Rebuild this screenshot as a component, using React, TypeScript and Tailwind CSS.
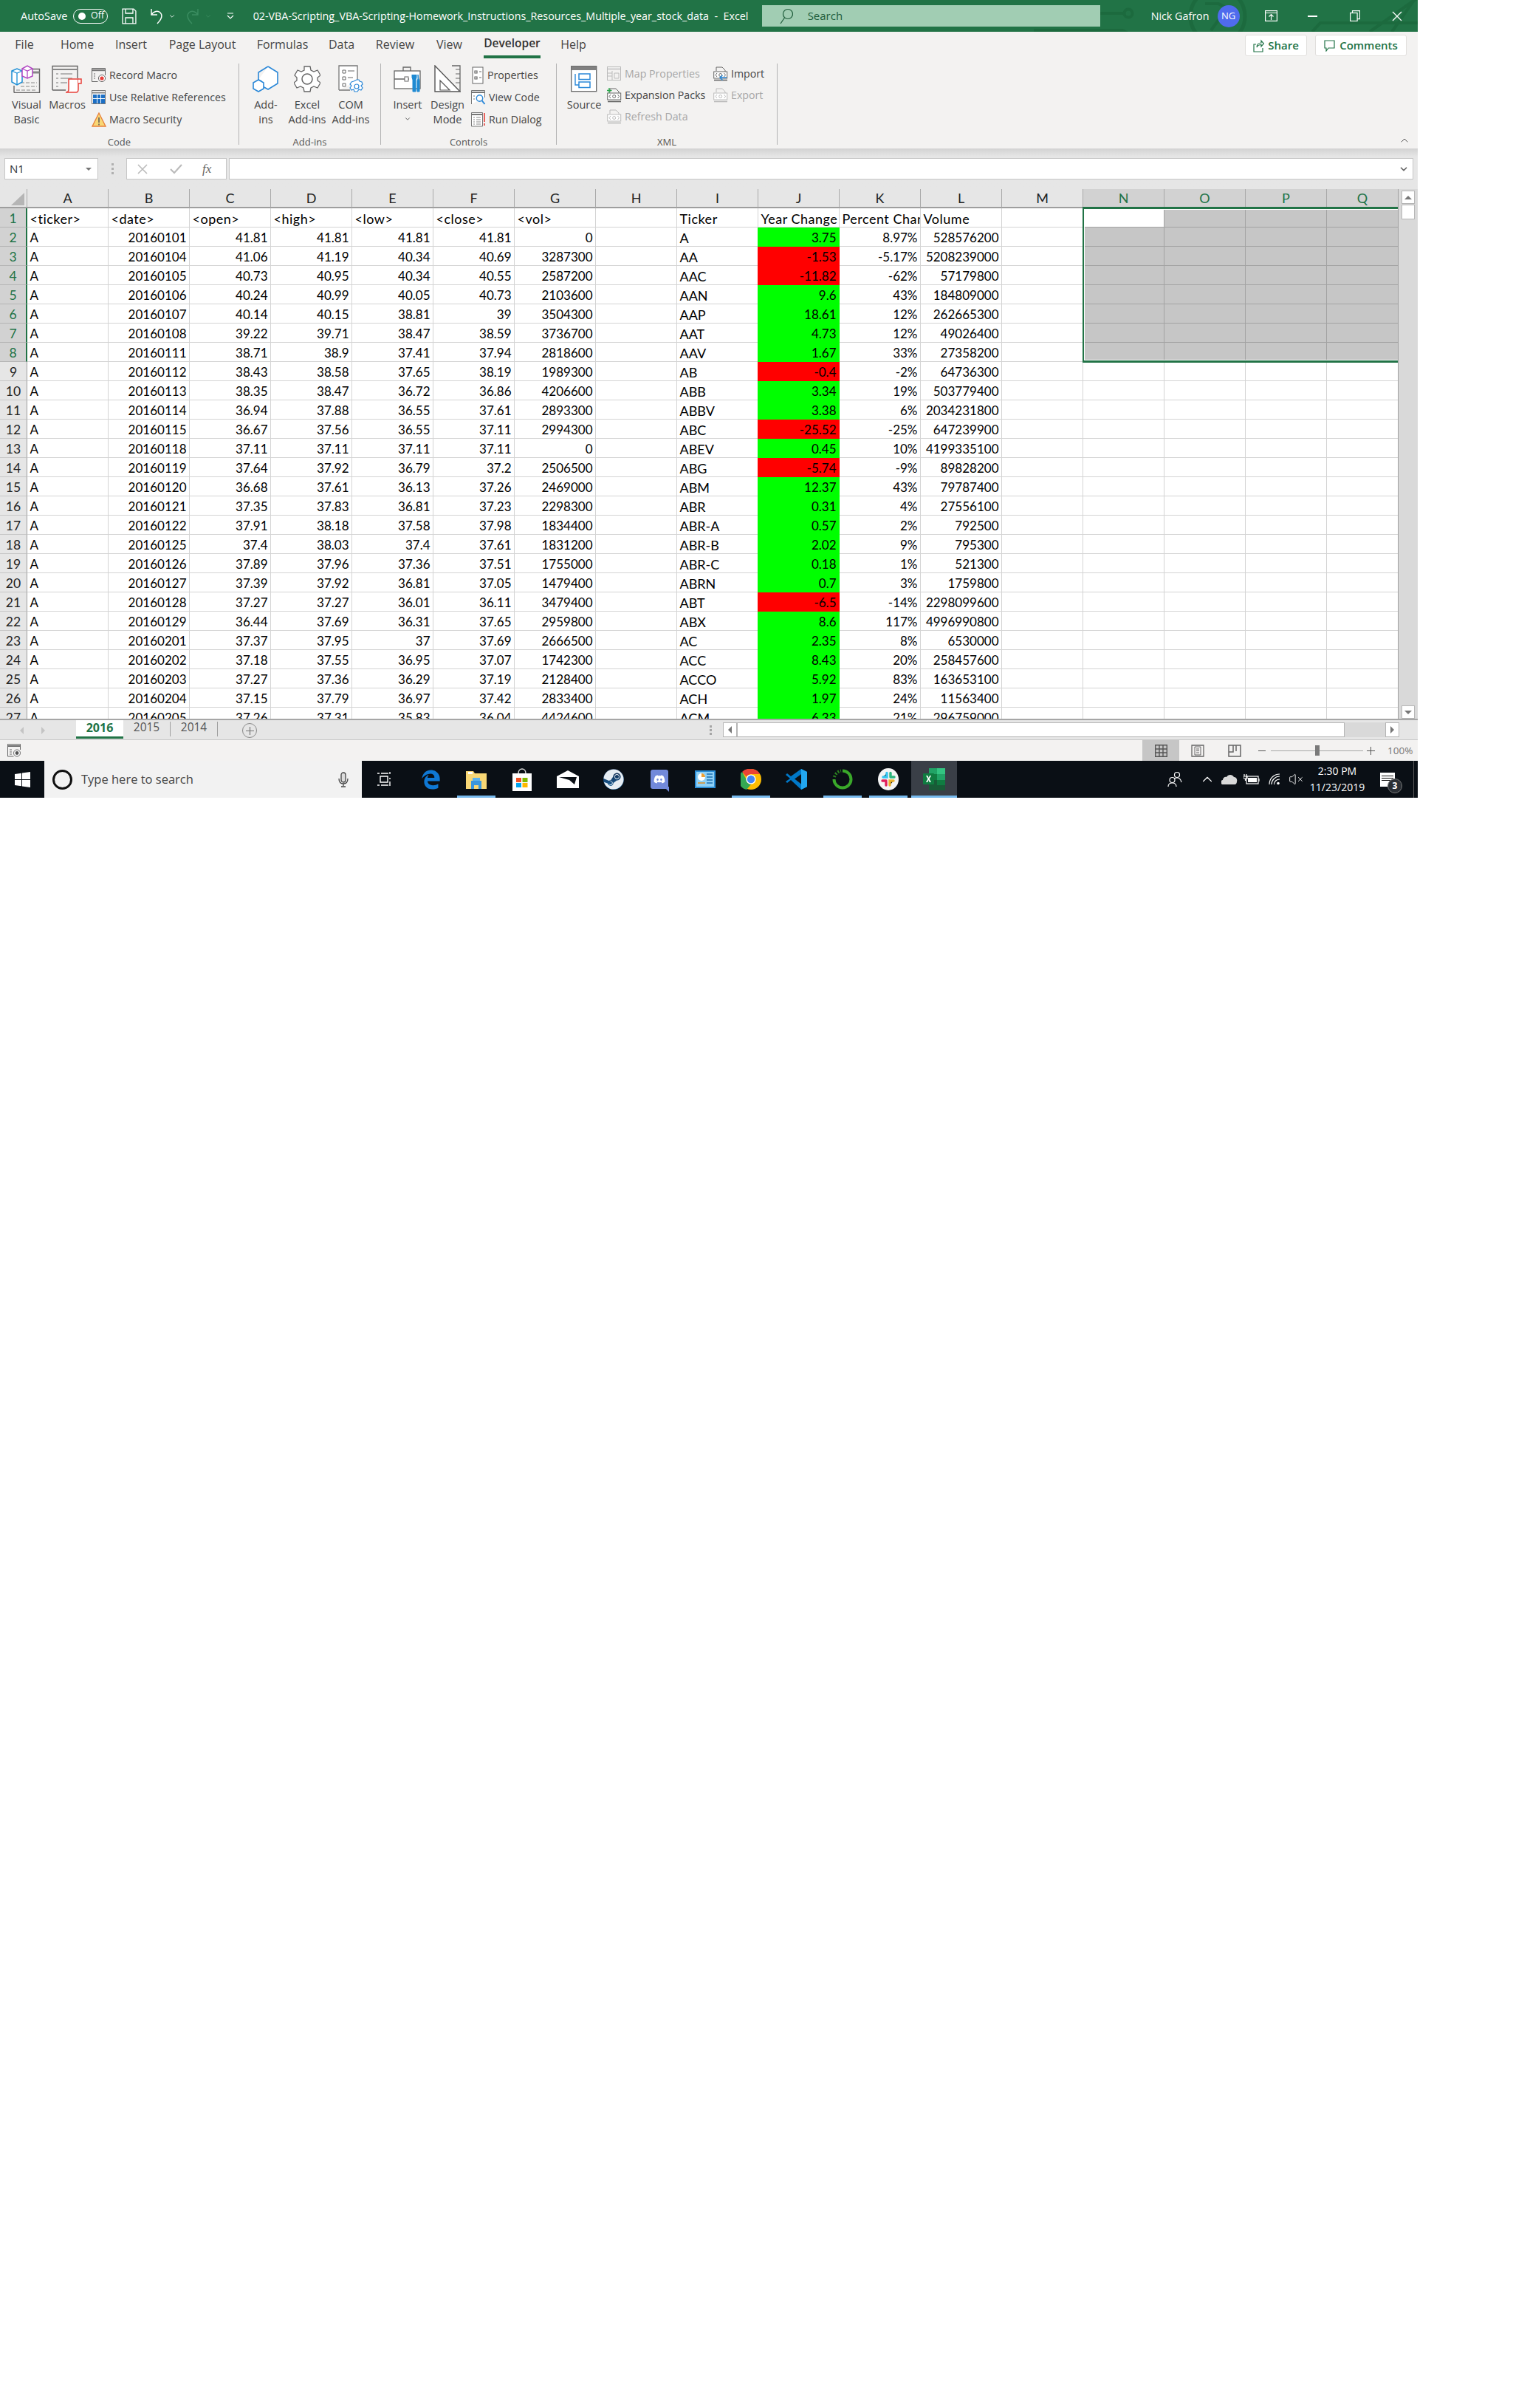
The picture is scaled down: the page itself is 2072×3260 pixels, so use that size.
import React from "react";
import clsx from "clsx";
import { ChevronDown, ChevronUp, VolumeX } from "lucide-react";
import { FaDiscord, FaEdgeLegacy, FaSteam } from "react-icons/fa";

const SEGOE = "font-['Open_Sans','Noto_Sans',sans-serif]";
const CALIBRI = "font-['Lato','Liberation_Sans',sans-serif]";

// rows 2..27, columns A..G
const LEFT = [
  ["A", "20160101", "41.81", "41.81", "41.81", "41.81", "0"],
  ["A", "20160104", "41.06", "41.19", "40.34", "40.69", "3287300"],
  ["A", "20160105", "40.73", "40.95", "40.34", "40.55", "2587200"],
  ["A", "20160106", "40.24", "40.99", "40.05", "40.73", "2103600"],
  ["A", "20160107", "40.14", "40.15", "38.81", "39", "3504300"],
  ["A", "20160108", "39.22", "39.71", "38.47", "38.59", "3736700"],
  ["A", "20160111", "38.71", "38.9", "37.41", "37.94", "2818600"],
  ["A", "20160112", "38.43", "38.58", "37.65", "38.19", "1989300"],
  ["A", "20160113", "38.35", "38.47", "36.72", "36.86", "4206600"],
  ["A", "20160114", "36.94", "37.88", "36.55", "37.61", "2893300"],
  ["A", "20160115", "36.67", "37.56", "36.55", "37.11", "2994300"],
  ["A", "20160118", "37.11", "37.11", "37.11", "37.11", "0"],
  ["A", "20160119", "37.64", "37.92", "36.79", "37.2", "2506500"],
  ["A", "20160120", "36.68", "37.61", "36.13", "37.26", "2469000"],
  ["A", "20160121", "37.35", "37.83", "36.81", "37.23", "2298300"],
  ["A", "20160122", "37.91", "38.18", "37.58", "37.98", "1834400"],
  ["A", "20160125", "37.4", "38.03", "37.4", "37.61", "1831200"],
  ["A", "20160126", "37.89", "37.96", "37.36", "37.51", "1755000"],
  ["A", "20160127", "37.39", "37.92", "36.81", "37.05", "1479400"],
  ["A", "20160128", "37.27", "37.27", "36.01", "36.11", "3479400"],
  ["A", "20160129", "36.44", "37.69", "36.31", "37.65", "2959800"],
  ["A", "20160201", "37.37", "37.95", "37", "37.69", "2666500"],
  ["A", "20160202", "37.18", "37.55", "36.95", "37.07", "1742300"],
  ["A", "20160203", "37.27", "37.36", "36.29", "37.19", "2128400"],
  ["A", "20160204", "37.15", "37.79", "36.97", "37.42", "2833400"],
  ["A", "20160205", "37.26", "37.31", "35.83", "36.04", "4424600"],
];

const SUMMARY = [
  ["A", "3.75", "8.97%", "528576200"],
  ["AA", "-1.53", "-5.17%", "5208239000"],
  ["AAC", "-11.82", "-62%", "57179800"],
  ["AAN", "9.6", "43%", "184809000"],
  ["AAP", "18.61", "12%", "262665300"],
  ["AAT", "4.73", "12%", "49026400"],
  ["AAV", "1.67", "33%", "27358200"],
  ["AB", "-0.4", "-2%", "64736300"],
  ["ABB", "3.34", "19%", "503779400"],
  ["ABBV", "3.38", "6%", "2034231800"],
  ["ABC", "-25.52", "-25%", "647239900"],
  ["ABEV", "0.45", "10%", "4199335100"],
  ["ABG", "-5.74", "-9%", "89828200"],
  ["ABM", "12.37", "43%", "79787400"],
  ["ABR", "0.31", "4%", "27556100"],
  ["ABR-A", "0.57", "2%", "792500"],
  ["ABR-B", "2.02", "9%", "795300"],
  ["ABR-C", "0.18", "1%", "521300"],
  ["ABRN", "0.7", "3%", "1759800"],
  ["ABT", "-6.5", "-14%", "2298099600"],
  ["ABX", "8.6", "117%", "4996990800"],
  ["AC", "2.35", "8%", "6530000"],
  ["ACC", "8.43", "20%", "258457600"],
  ["ACCO", "5.92", "83%", "163653100"],
  ["ACH", "1.97", "24%", "11563400"],
  ["ACM", "6.33", "21%", "296759000"],
];

const TOP_ROW = ["<ticker>", "<date>", "<open>", "<high>", "<low>", "<close>", "<vol>", "", "Ticker", "Year Change", "Percent Change", "Volume"];
const COLUMNS = "ABCDEFGHIJKLMNOPQ".split("");

const TABS = [
  { label: "File", w: "w-[56px]" },
  { label: "Home", w: "w-[87px]" },
  { label: "Insert", w: "w-[59px]" },
  { label: "Page Layout", w: "w-[134px]" },
  { label: "Formulas", w: "w-[83px]" },
  { label: "Data", w: "w-[77px]" },
  { label: "Review", w: "w-[68px]" },
  { label: "View", w: "w-[79px]" },
  { label: "Developer", w: "w-[91px]", active: true },
  { label: "Help", w: "w-[75px]" },
];

const Ico = ({ w, h, children }: { w: number; h: number; children: React.ReactNode }) => (
  <svg width={w} height={h} viewBox={`0 0 ${w} ${h}`} fill="none" stroke="#5f5f5f" strokeWidth="1" className="shrink-0">
    {children}
  </svg>
);

// ---- ribbon icons ----
const VisualBasicIcon = () => (
  <Ico w={42} h={38}>
    <path d="M4 37.5h34.5V5.5H27M4 28v9.5" stroke="#666" strokeWidth="1.4" />
    <path d="M27 10h11.5" stroke="#888" strokeWidth="3" />
    <path d="M13 24h22M13 29h22M7 34h28" stroke="#888" strokeDasharray="5 2" />
    <path d="M1 8l7-3 7 3v15l-7 4-7-4z" fill="#fff" stroke="#1e8fd5" strokeWidth="1.5" />
    <path d="M1 8l7 3 7-3M8 11v16" stroke="#1e8fd5" strokeWidth="1.3" />
    <path d="M15 5l7-4 7 4v10l-7 3-7-3z" fill="#fff" stroke="#b146c2" strokeWidth="1.5" />
    <path d="M15 5l7 3 7-3M22 8v10" stroke="#b146c2" strokeWidth="1.3" />
  </Ico>
);
const MacrosIcon = () => (
  <Ico w={42} h={38}>
    <path d="M1 34V1.5h34V18M1 34h18" stroke="#666" strokeWidth="1.4" />
    <path d="M1 6h34" stroke="#888" strokeWidth="2" />
    <path d="M6 12h3M12 12h16M6 18h3M12 18h16M6 24h3M12 24h9M6 29h3" stroke="#777" />
    <path d="M23 19h13v14c0 3-1 4-3 4H19c3 0 4-1 4-4z" fill="#fff" stroke="#e8403a" strokeWidth="1.5" />
    <path d="M36 19h4v6h-4" fill="#fff" stroke="#e8403a" strokeWidth="1.5" />
  </Ico>
);
const RecordIcon = () => (
  <Ico w={20} h={20}>
    <path d="M.5 18.5V.5h18V10M.5 18.5h8" stroke="#666" />
    <path d="M1 3h17" stroke="#777" strokeWidth="2.4" />
    <path d="M3 8h2M3 11h2M3 14h2" stroke="#666" />
    <circle cx="14" cy="14" r="4.6" fill="#fff" stroke="#666" />
    <circle cx="14" cy="14" r="2.6" fill="#e8403a" stroke="none" />
  </Ico>
);
const RelativeIcon = () => (
  <Ico w={20} h={20}>
    <rect x=".5" y=".5" width="18" height="18" fill="#fff" stroke="#777" />
    <path d="M1 3.5h17" stroke="#888" strokeWidth="2" />
    <path d="M2 6h5v5H2zM8 6h4v5H8zM13 6h5v5h-5zM2 12h5v6H2zM8 12h4v6H8zM13 12h5v6h-5z" fill="#1c6fc4" stroke="none" />
  </Ico>
);
const WarnIcon = () => (
  <Ico w={20} h={20}>
    <path d="M10 1l9 18H1z" fill="#f8d775" stroke="#e8803a" strokeWidth="1.3" />
    <path d="M10 7v7M10 15.5v2" stroke="#555" strokeWidth="1.5" />
  </Ico>
);
const AddinsIcon = () => (
  <Ico w={36} h={36}>
    <path d="M21 1l13 8v15l-13 8-9-5v-6l-4-2" fill="#fff" stroke="#2b88d8" strokeWidth="1.6" />
    <path d="M8 19l7 4v8l-7 4-7-4v-8z" fill="#fff" stroke="#2b88d8" strokeWidth="1.6" />
    <path d="M21 1L8 9v10" stroke="#2b88d8" strokeWidth="1.6" />
  </Ico>
);
const GearIcon = () => (
  <Ico w={36} h={36}>
    <path d="M14 1h8l1 5 4 2 5-2 4 7-4 3v4l4 3-4 7-5-2-4 2-1 5h-8l-1-5-4-2-5 2-4-7 4-3v-4L1 13l4-7 5 2 4-2z" stroke="#666" strokeWidth="1.3" fill="#fff" />
    <circle cx="18" cy="18" r="7" stroke="#666" strokeWidth="1.5" />
  </Ico>
);
const ComIcon = () => (
  <Ico w={34} h={38}>
    <path d="M1 34V1h25v20M1 34h15" stroke="#777" strokeWidth="1.3" fill="#fff" />
    <path d="M6 7h4v4H6zM6 16h4v4H6zM6 25h4v4H6zM13 8h9M13 17h7" stroke="#666" />
    <path d="M23 21l2-1h3l1 2 3 1 1 3-2 2 2 3-2 3-3-1-2 3h-4l-1-3-3 1-2-3 2-3-2-2 2-3 3-1z" fill="#fff" stroke="#2b88d8" strokeWidth="1.2" />
    <circle cx="25" cy="29" r="3" stroke="#2b88d8" strokeWidth="1.2" />
  </Ico>
);
const InsertIcon = () => (
  <Ico w={38} h={38}>
    <rect x="1" y="8" width="35" height="24" fill="#fff" stroke="#666" strokeWidth="1.3" />
    <path d="M13 8V3h10v5M1 19h20" stroke="#666" strokeWidth="1.3" />
    <rect x="15" y="16" width="5" height="6" fill="#fff" stroke="#666" />
    <path d="M25 13v4l1 3v16h4V20l1-3v-4M33 13v6l-1 2v15h3V21l-1-2z" fill="#1f8ad2" stroke="#1f8ad2" />
  </Ico>
);
const DesignIcon = () => (
  <Ico w={36} h={38}>
    <path d="M1 1l34 35H1z" fill="#fff" stroke="#555" strokeWidth="1.4" />
    <path d="M8 21l13 13H8z" stroke="#555" strokeWidth="1.2" />
    <path d="M24 1h11v35" stroke="#666" strokeWidth="1.3" />
    <path d="M29 6h6M29 12h6M29 18h6M29 24h6" stroke="#666" />
  </Ico>
);
const PropsIcon = () => (
  <Ico w={18} h={24}>
    <rect x="2" y="1" width="14" height="22" fill="#fff" stroke="#666" />
    <path d="M5 6h3v3H5zM5 14h3v3H5zM11 7h3M11 15h3" stroke="#666" strokeWidth="1.2" />
  </Ico>
);
const ViewCodeIcon = () => (
  <Ico w={20} h={20}>
    <path d="M.5 19V.5h18V10" stroke="#777" fill="#fff" />
    <path d="M1 3h17" stroke="#777" strokeWidth="2" />
    <path d="M3 8h2M3 12h2" stroke="#777" />
    <circle cx="11.5" cy="11" r="4.2" stroke="#2b88d8" strokeWidth="1.4" />
    <path d="M14.5 14l4 5" stroke="#2b88d8" strokeWidth="2" />
  </Ico>
);
const RunDialogIcon = () => (
  <Ico w={20} h={20}>
    <path d="M.5 19V.5h15V19z" fill="#fff" stroke="#777" />
    <path d="M1 3h14" stroke="#777" strokeWidth="2" />
    <path d="M3 7h2M7 7h6M3 10h2M7 10h6M3 13h2M7 13h6M3 16h2M7 16h6" stroke="#888" />
    <path d="M18 1v12M18 15v3" stroke="#e8403a" strokeWidth="1.6" />
  </Ico>
);
const SourceIcon = () => (
  <Ico w={36} h={36}>
    <rect x=".7" y=".7" width="34" height="34" fill="#fff" stroke="#666" strokeWidth="1.3" />
    <path d="M1 3.5h33" stroke="#808080" strokeWidth="5" />
    <path d="M6 11v15h5" stroke="#2b88d8" strokeWidth="1.4" />
    <rect x="11" y="11" width="15" height="7.5" stroke="#2b88d8" strokeWidth="1.5" fill="#fff" />
    <rect x="11" y="22" width="15" height="7.5" stroke="#2b88d8" strokeWidth="1.5" fill="#fff" />
  </Ico>
);
const MapPropsIcon = () => (
  <Ico w={20} h={20}>
    <rect x=".5" y=".5" width="18" height="18" fill="#f3f2f1" stroke="#bbb" />
    <path d="M1 3.5h17" stroke="#ccc" strokeWidth="2" />
    <path d="M7 6v12M1 9h6M1 13h6M10 9h6v7h-6z" stroke="#bbb" />
  </Ico>
);
const XmlDoc = ({ off, plus, arrow }: { off?: boolean; plus?: boolean; arrow?: boolean }) => {
  const c = off ? "#bbb" : "#666";
  return (
    <Ico w={20} h={20}>
      <path d="M4 6V1h8l4 4v3" stroke={c} fill="none" />
      <rect x=".7" y="7" width="18" height="9" stroke={c} fill="#fff" />
      <path d="M1 18.5h18" stroke={c} strokeWidth="1.6" />
      <path d="M5 9l-2 2.5L5 14M14.5 9l2 2.5-2 2.5" stroke={c} />
      <circle cx="9.7" cy="11.5" r="2" stroke={c} />
      {plus && <path d="M3 0v7M0 3.5h6.5" stroke="#2aa84a" strokeWidth="1.4" />}
      {arrow && <path d="M18 15H9m3.5-3L9 15l3.5 3.5" stroke="#2b88d8" strokeWidth="1.5" />}
    </Ico>
  );
};

// ---- taskbar icons ----
const WindowsLogo = () => (
  <svg width="21" height="21" viewBox="0 0 21 21" fill="#fff">
    <path d="M0 3l9-1.3V10H0zM10 1.5L21 0v10H10zM0 11h9v8.3L0 18zM10 11h11v10l-11-1.5z" />
  </svg>
);
const ChromeIcon = () => (
  <svg width="28" height="28" viewBox="0 0 28 28">
    <circle cx="14" cy="14" r="14" fill="#fbbc04" />
    <path d="M14 0a14 14 0 0 1 12.1 7H14a7 7 0 0 0-6.1 3.5L2 3.9A14 14 0 0 1 14 0z" fill="#ea4335" />
    <path d="M2 3.9l5.9 10.6A7 7 0 0 0 14 21l-6 7A14 14 0 0 1 2 3.9z" fill="#34a853" />
    <circle cx="14" cy="14" r="6.6" fill="#fff" />
    <circle cx="14" cy="14" r="5.2" fill="#4285f4" />
  </svg>
);
const VsCodeIcon = () => (
  <svg width="30" height="30" viewBox="0 0 30 30">
    <path d="M21 1l8 4v20l-8 4L7 16 2 20l-2-2 6-4-6-5 2-2 5 4z" fill="#0078c8" />
    <path d="M21 1l8 4v20l-8 4zM21 8l-9 6.5 9 7z" fill="#22a7f0" />
    <path d="M21 8l-9 6.5 9 7z" fill="#0a0f15" />
  </svg>
);
const SlackIcon = () => (
  <svg width="28" height="30" viewBox="0 0 28 30">
    <ellipse cx="14" cy="15" rx="14" ry="15" fill="#f4f4f4" />
    <g strokeLinecap="round" strokeWidth="3.4">
      <path d="M12 6.5v5.5H7" stroke="#36c5f0" />
      <path d="M17 6.5V12" stroke="#2eb67d" />
      <path d="M22 12h-4" stroke="#2eb67d" />
      <path d="M21 17h-5v6" stroke="#ecb22e" />
      <path d="M11 18v5M6 17h5" stroke="#e01e5a" />
    </g>
  </svg>
);
const ExcelIcon = () => (
  <svg width="30" height="30" viewBox="0 0 30 30">
    <path d="M8 0h22v30H8z" fill="#185c37" />
    <path d="M19 0h11v8H19z" fill="#33c481" />
    <path d="M8 0h11v8H8z" fill="#21a366" />
    <path d="M8 8h11v8H8z" fill="#107c41" />
    <path d="M19 8h11v8H19z" fill="#21a366" />
    <path d="M19 16h11v7H19z" fill="#107c41" />
    <rect y="7" width="15" height="15" rx="1" fill="#107c41" />
    <path d="M4 10h2.2l1.4 3 1.5-3h2L8.600 14.500 11 19H8.800l-1.300-3-1.400 3H4l2.500-4.500z" fill="#fff" />
  </svg>
);
const TaskSlot = ({ active, on, children }: { active?: boolean; on?: boolean; children: React.ReactNode }) => (
  <div className={clsx("relative flex h-full w-[62px] items-center justify-center", on && "bg-[#3a3f47]")}>
    {children}
    {active && <div className={clsx("absolute bottom-0 h-[3px] bg-[#76b9ed]", on ? "inset-x-0" : "inset-x-[5px]")} />}
  </div>
);

// ---- ribbon layout helpers ----
const BigButton = ({ icon, lines, w }: { icon: React.ReactNode; lines: string[]; w: string }) => (
  <div className={clsx("flex flex-col items-center pt-[9px]", w)}>
    <div className="flex h-[38px] items-center">{icon}</div>
    <div className="mt-[6px] text-center text-[14.5px] leading-[20px] whitespace-nowrap text-[#444]">
      {lines.map((l) => (
        <div key={l}>{l}</div>
      ))}
    </div>
  </div>
);
const SmallButton = ({ icon, label, off, tall }: { icon: React.ReactNode; label: string; off?: boolean; tall?: boolean }) => (
  <div className={clsx("flex items-center gap-[4px] whitespace-nowrap text-[14.2px]", tall ? "h-[30px]" : "h-[29px]", off ? "text-[#a6a6a6]" : "text-[#444]")}>
    {icon}
    {label}
  </div>
);
const Group = ({ w, pad, label, children }: { w: string; pad: string; label: string; children: React.ReactNode }) => (
  <div className={clsx("flex h-full shrink-0 flex-col", w)}>
    <div className={clsx("flex h-[105px]", pad)}>{children}</div>
    <div className="text-center text-[13px] leading-[16px] text-[#555]">{label}</div>
  </div>
);
const Sep = () => <div className="mt-[7px] h-[110px] w-px shrink-0 bg-[#b3b3b3]" />;

// ---- main sections ----
const TitleBar = () => (
  <div className={clsx("relative flex h-[43px] shrink-0 items-center overflow-hidden bg-[#217346] text-white", SEGOE)}>
    <svg className="absolute inset-0" width="1920" height="43" fill="none" stroke="#1c6a3e" strokeWidth="4">
      <path d="M1488 18h34M1400 41h120l6 3" />
      <circle cx="1528" cy="18" r="5.5" />
      <circle cx="1649" cy="22" r="37" strokeWidth="5" />
      <path d="M1632 5h18l12 6-22 30" />
      <path d="M1777 43l11-12h132M1855 43l65-46M1915 0l-30 43" />
    </svg>
    <span className="relative ml-[28px] w-[63px] text-[14.5px] whitespace-nowrap">AutoSave</span>
    <div className="relative ml-[8px] flex h-[20px] w-[47px] items-center rounded-full border border-white pl-[6px]">
      <div className="h-[10px] w-[10px] rounded-full bg-white" />
      <span className="ml-[7px] text-[12.5px]">Off</span>
    </div>
    <svg className="relative ml-[19px]" width="20" height="22" viewBox="0 0 20 22" fill="none" stroke="#fff" strokeWidth="1.3">
      <path d="M1 1h15l3 3v17H1z" />
      <path d="M5 1v6h10V1M5 21v-8h10v8" />
    </svg>
    <svg className="relative ml-[18px]" width="18" height="22" viewBox="0 0 18 22" fill="none" stroke="#fff" strokeWidth="1.4">
      <path d="M2 1v8h8M2 9c3-5 9-6 12-3s3 8-4 15" />
    </svg>
    <ChevronDown className="relative ml-[7px] text-white" size={10} strokeWidth={2} />
    <svg className="relative ml-[14px]" width="18" height="22" viewBox="0 0 18 22" fill="none" stroke="#3b8d61" strokeWidth="1.4">
      <path d="M16 1v8H8M16 9c-3-5-9-6-12-3s-3 8 4 15" />
    </svg>
    <ChevronDown className="relative ml-[7px] text-[#3b8d61]" size={10} strokeWidth={2} />
    <svg className="relative ml-[20px]" width="10" height="10" viewBox="0 0 10 10" fill="none" stroke="#fff" strokeWidth="1.1">
      <path d="M1 1h8M1 4l4 4 4-4" />
    </svg>
    <div className="relative ml-[26px] w-[689px] shrink-0 text-[14.3px] whitespace-pre">02-VBA-Scripting_VBA-Scripting-Homework_Instructions_Resources_Multiple_year_stock_data  -  Excel</div>
    <div className="relative flex h-[29px] w-[458px] shrink-0 items-center bg-[#a1cdb3] pl-[24px] text-[15px] text-[#1e5c3a]">
      <svg width="18" height="22" viewBox="0 0 18 22" fill="none" stroke="#1e5c3a" strokeWidth="1.2">
        <circle cx="11" cy="8" r="6.5" />
        <path d="M6.500 13L1 21" />
      </svg>
      <span className="ml-[20px]">Search</span>
    </div>
    <span className="relative ml-[69px] w-[77px] shrink-0 text-[14.3px] whitespace-nowrap">Nick Gafron</span>
    <div className="relative ml-[13px] flex h-[30px] w-[30px] shrink-0 items-center justify-center rounded-full bg-[#4f6bed] text-[13px]">NG</div>
    <div className="relative ml-[14px] flex h-full w-[57px] items-center justify-center">
      <svg width="17" height="15" viewBox="0 0 17 15" fill="none" stroke="#fff" strokeWidth="1.2">
        <rect x=".6" y=".6" width="15.800" height="13.800" />
        <path d="M1 3.500h15M8.500 13V6M5.500 8.500l3-3 3 3" />
      </svg>
    </div>
    <div className="relative flex h-full w-[57px] items-center justify-center">
      <div className="h-[2px] w-[13px] bg-white" />
    </div>
    <div className="relative flex h-full w-[57px] items-center justify-center">
      <svg width="14" height="15" viewBox="0 0 14 15" fill="none" stroke="#fff" strokeWidth="1.2">
        <rect x=".6" y="3.500" width="9.500" height="11" />
        <path d="M3.500 3.500V.6h10v11h-3.400" />
      </svg>
    </div>
    <div className="relative flex h-full w-[57px] items-center justify-center">
      <svg width="14" height="14" viewBox="0 0 14 14" stroke="#fff" strokeWidth="1.3">
        <path d="M1 1l12 12M13 1L1 13" />
      </svg>
    </div>
  </div>
);

const TabRow = () => (
  <div className={clsx("flex h-[36px] shrink-0 items-start bg-[#f3f2f1] pl-[5px] text-[16px] text-[#444]", SEGOE)}>
    {TABS.map((t) => (
      <div key={t.label} className={clsx("flex h-full shrink-0 justify-center", t.w)}>
        <span className={clsx("flex h-full items-center", t.active ? "border-b-4 border-[#217346] text-[15.5px] font-semibold text-[#333]" : "pb-[2px]")}>{t.label}</span>
      </div>
    ))}
    <div className="flex-1" />
    <button className="mt-[4px] flex h-[29px] w-[84px] items-center justify-center gap-[5px] rounded-[3px] border border-[#e1dfdd] bg-white text-[15px] font-semibold text-[#217346]">
      <svg width="15" height="19" viewBox="0 0 15 19" fill="none" stroke="#217346" strokeWidth="1.2">
        <path d="M4 8H1v10h12v-5M5 12c0-4 3-6 6-6V3l3.500 4L11 11V8.500c-3 0-5 1-6 3.500z" />
      </svg>
      Share
    </button>
    <button className="mt-[4px] ml-[11px] flex h-[29px] w-[124px] items-center justify-center gap-[6px] rounded-[3px] border border-[#e1dfdd] bg-white text-[15px] font-semibold text-[#217346]">
      <svg width="15" height="16" viewBox="0 0 15 16" fill="none" stroke="#217346" strokeWidth="1.2">
        <path d="M1 1h13v10H6l-3 4v-4H1z" />
      </svg>
      Comments
    </button>
    <div className="w-[15px] shrink-0" />
  </div>
);

const Ribbon = () => (
  <div className={clsx("relative flex h-[122px] shrink-0 bg-[#f3f2f1] text-[#444]", SEGOE)}>
    <Group w="w-[323px]" pad="pl-[8px]" label="Code">
      <BigButton w="w-[56px]" icon={<VisualBasicIcon />} lines={["Visual", "Basic"]} />
      <BigButton w="w-[54px]" icon={<MacrosIcon />} lines={["Macros"]} />
      <div className="ml-[6px] pt-[8px]">
        <SmallButton tall icon={<RecordIcon />} label="Record Macro" />
        <SmallButton tall icon={<RelativeIcon />} label="Use Relative References" />
        <SmallButton tall icon={<WarnIcon />} label="Macro Security" />
      </div>
    </Group>
    <Sep />
    <Group w="w-[191px]" pad="pl-[10px]" label="Add-ins">
      <BigButton w="w-[52px]" icon={<AddinsIcon />} lines={["Add-", "ins"]} />
      <BigButton w="w-[60px]" icon={<GearIcon />} lines={["Excel", "Add-ins"]} />
      <BigButton w="w-[58px]" icon={<ComIcon />} lines={["COM", "Add-ins"]} />
    </Group>
    <Sep />
    <Group w="w-[237px]" pad="pl-[10px]" label="Controls">
      <div className="flex w-[52px] flex-col items-center pt-[9px]">
        <div className="flex h-[38px] items-center">
          <InsertIcon />
        </div>
        <div className="mt-[6px] text-[14.5px] leading-[20px] text-[#444]">Insert</div>
        <ChevronDown className="mt-[4px] text-[#444]" size={10} strokeWidth={2} />
      </div>
      <BigButton w="w-[56px]" icon={<DesignIcon />} lines={["Design", "Mode"]} />
      <div className="ml-[4px] pt-[8px]">
        <SmallButton tall icon={<PropsIcon />} label="Properties" />
        <SmallButton tall icon={<ViewCodeIcon />} label="View Code" />
        <SmallButton tall icon={<RunDialogIcon />} label="Run Dialog" />
      </div>
    </Group>
    <Sep />
    <Group w="w-[298px]" pad="pl-[7px]" label="XML">
      <BigButton w="w-[60px]" icon={<SourceIcon />} lines={["Source"]} />
      <div className="ml-[1px] w-[144px] shrink-0 pt-[6px]">
        <SmallButton off icon={<MapPropsIcon />} label="Map Properties" />
        <SmallButton icon={<XmlDoc plus />} label="Expansion Packs" />
        <SmallButton off icon={<XmlDoc off />} label="Refresh Data" />
      </div>
      <div className="pt-[6px]">
        <SmallButton icon={<XmlDoc arrow />} label="Import" />
        <SmallButton off icon={<XmlDoc off />} label="Export" />
      </div>
    </Group>
    <Sep />
    <ChevronUp className="absolute right-[10px] bottom-[3px] text-[#444]" size={16} strokeWidth={1.4} />
  </div>
);

const FormulaBar = () => (
  <div className={clsx("flex h-[55px] shrink-0 items-start bg-[#e6e6e6] bg-gradient-to-b from-[#d2d2d2] via-[#e6e6e6] via-[20%] to-[#e6e6e6] pt-[13px] pl-[6px]", SEGOE)}>
    <div className="flex h-[29px] w-[127px] items-center justify-between border border-[#c6c6c6] bg-white pr-[8px] pl-[6px] text-[15px] text-[#333]">
      N1
      <div className="h-0 w-0 border-x-[4px] border-t-[4px] border-x-transparent border-t-[#777]" />
    </div>
    <div className="ml-[18px] flex h-[29px] flex-col justify-center gap-[3px]">
      <div className="h-[3px] w-[3px] bg-[#b0b0b0]" />
      <div className="h-[3px] w-[3px] bg-[#b0b0b0]" />
      <div className="h-[3px] w-[3px] bg-[#b0b0b0]" />
    </div>
    <div className="ml-[17px] flex h-[29px] w-[136px] items-center border border-[#c6c6c6] bg-white">
      <svg className="ml-[14px]" width="14" height="14" viewBox="0 0 14 14" stroke="#bbb" strokeWidth="1.6">
        <path d="M1 1l12 12M13 1L1 13" />
      </svg>
      <svg className="ml-[30px]" width="17" height="14" viewBox="0 0 17 14" fill="none" stroke="#bbb" strokeWidth="2.200">
        <path d="M1 7l5 5L16 1" />
      </svg>
      <span className="ml-[27px] font-['Liberation_Serif',serif] text-[17px] italic text-[#666]">fx</span>
    </div>
    <div className="ml-[3px] flex h-[29px] w-[1604px] items-center justify-end border border-[#c6c6c6] bg-white pr-[5px]">
      <ChevronDown size={14} strokeWidth={3} className="text-[#666]" />
    </div>
  </div>
);

type CellProps = { right?: boolean; cls?: string; children?: React.ReactNode };
const Cell = ({ right, cls, children }: CellProps) => (
  <div className={clsx("h-[26px] overflow-hidden border-r border-b px-[3.500px] pt-[2px] leading-[24px] whitespace-nowrap", right && "text-right", cls ?? "border-[#d4d4d4]")}>
    {children}
  </div>
);

const SheetRow = ({ num }: { num: number }) => {
  const selected = num <= 8;
  const left = num > 1 ? LEFT[num - 2] : null;
  const sum = num > 1 ? SUMMARY[num - 2] : null;
  const up = sum ? !sum[1].startsWith("-") : false;
  return (
    <div className="grid h-[26px] grid-cols-[37px_repeat(16,110px)_97px]">
      <div
        className={clsx(
          "h-[26px] pt-[2px] text-center text-[17.5px] leading-[24px]",
          selected ? "border-r-[2px] border-b border-r-[#217346] border-b-[#b5b5b5] bg-[#d2d2d2] text-[#217346]" : "border-r border-b border-r-[#9e9e9e] border-b-[#c6c6c6] bg-[#e6e6e6] text-[#222]"
        )}
      >
        {num}
      </div>
      {num === 1
        ? TOP_ROW.map((t, i) => (
            <Cell key={i} cls="border-[#d4d4d4] text-[18px] tracking-[0.5px]">
              {t}
            </Cell>
          ))
        : left!.map((v, i) => (
            <Cell key={i} right={i > 0}>
              {v}
            </Cell>
          ))}
      {sum && (
        <>
          <Cell />
          <Cell cls="border-[#d4d4d4] text-[18px]">{sum[0]}</Cell>
          <Cell right cls={up ? "ml-[-1px] border-[#00ff00] bg-[#00ff00]" : "ml-[-1px] border-[#ff0000] bg-[#ff0000]"}>
            {sum[1]}
          </Cell>
          <Cell right>{sum[2]}</Cell>
          <Cell right>{sum[3]}</Cell>
        </>
      )}
      <Cell />
      {["N", "O", "P", "Q"].map((c) => (
        <Cell key={c} cls={selected && !(num === 1 && c === "N") ? "border-[#a3a3a3] bg-[#c6c6c6]" : num === 1 && c === "N" ? "border-[#a3a3a3] bg-white" : undefined} />
      ))}
    </div>
  );
};

const Sheet = () => (
  <div className={clsx("flex h-[717px] shrink-0 bg-white text-[17px] text-black", CALIBRI)}>
    <div className="relative h-full w-[1894px] shrink-0 overflow-hidden border-r border-[#9e9e9e]">
      <div className="grid h-[26px] grid-cols-[37px_repeat(16,110px)_97px]">
        <div className="relative border-r border-b-[2px] border-r-[#a9a9a9] border-b-[#9e9e9e] bg-[#e6e6e6]">
          <svg className="absolute top-[5px] left-[15px]" width="19" height="17" viewBox="0 0 19 17">
            <path d="M18 0v17H0z" fill="#b5b5b5" />
          </svg>
        </div>
        {COLUMNS.map((c, i) => (
          <div
            key={c}
            className={clsx(
              "border-r border-b-[2px] border-r-[#a9a9a9] border-b-[#9e9e9e] text-center text-[18px] leading-[24px]",
              i >= 13 ? "bg-[#d2d2d2] text-[#217346]" : "bg-[#e6e6e6] text-[#222]"
            )}
          >
            {c}
          </div>
        ))}
      </div>
      {Array.from({ length: 27 }, (_, i) => (
        <SheetRow key={i} num={i + 1} />
      ))}
      {/* selection outline N1:Q8 */}
      <div className="absolute top-[24px] left-[1466px] h-[211px] w-[440px] border-x-2 border-y-[3px] border-[#217346] shadow-[inset_0_0_0_1px_#fff]" />
    </div>
    <div className="flex w-[26px] shrink-0 flex-col justify-between bg-[#d9d9d9] pt-[2px] pr-[4px] pl-[4px]">
      <div>
        <div className="flex h-[18px] items-center justify-center border border-[#b5b5b5] bg-white">
          <div className="h-0 w-0 border-x-[5px] border-b-[5px] border-x-transparent border-b-[#777]" />
        </div>
        <div className="mt-px h-[20px] border border-[#b5b5b5] bg-white" />
      </div>
      <div className="flex h-[18px] items-center justify-center border border-[#b5b5b5] bg-white">
        <div className="h-0 w-0 border-x-[5px] border-t-[5px] border-x-transparent border-t-[#777]" />
      </div>
    </div>
  </div>
);

const TabsBar = () => (
  <div className={clsx("relative flex h-[29px] shrink-0 border-t-2 border-b border-t-[#a6a6a6] border-b-[#c8c8c8] bg-[#e6e6e6]", SEGOE)}>
    <div className="ml-[27px] mt-[9px] h-0 w-0 border-y-[5px] border-r-[5px] border-y-transparent border-r-[#c4c4c4]" />
    <div className="ml-[24px] mt-[9px] h-0 w-0 border-y-[5px] border-l-[5px] border-y-transparent border-l-[#c4c4c4]" />
    <div className="ml-[42px] flex h-[25px] w-[64px] items-center justify-center border-b-[3px] border-[#217346] bg-white pb-[3px] text-[16px] font-bold text-[#217346]">2016</div>
    <div className="mt-[2px] flex h-[20px] w-[64px] items-center justify-center border-r border-[#9e9e9e] pb-[5px] text-[15.500px] text-[#555]">2015</div>
    <div className="mt-[2px] flex h-[20px] w-[64px] items-center justify-center border-r border-[#9e9e9e] pb-[5px] text-[15.500px] text-[#555]">2014</div>
    <div className="ml-[33px] mt-[4px] flex h-[20px] w-[20px] items-center justify-center rounded-full border border-[#888] text-[#777]">
      <svg width="11" height="11" viewBox="0 0 11 11" stroke="#777" strokeWidth="1.200">
        <path d="M5.500 0v11M0 5.500h11" />
      </svg>
    </div>
    <div className="ml-[613px] mt-[7px] flex flex-col gap-[2px]">
      <div className="h-[3px] w-[3px] bg-[#a6a6a6]" />
      <div className="h-[3px] w-[3px] bg-[#a6a6a6]" />
      <div className="h-[3px] w-[3px] bg-[#a6a6a6]" />
    </div>
    <div className="ml-[15px] mt-[3px] flex h-[20px] w-[916px] bg-[#d9d9d9]">
      <div className="flex w-[19px] items-center justify-center border border-[#b5b5b5] bg-white">
        <div className="h-0 w-0 border-y-[5px] border-r-[5px] border-y-transparent border-r-[#777]" />
      </div>
      <div className="h-full w-[823px] border border-[#b5b5b5] bg-white" />
      <div className="flex-1" />
      <div className="flex w-[19px] items-center justify-center border border-[#b5b5b5] bg-white">
        <div className="h-0 w-0 border-y-[5px] border-l-[5px] border-y-transparent border-l-[#777]" />
      </div>
    </div>
  </div>
);

const StatusBar = () => (
  <div className={clsx("flex h-[28px] shrink-0 items-center bg-[#f3f2f1]", SEGOE)}>
    <svg className="ml-[10px]" width="19" height="18" viewBox="0 0 19 18" fill="none" stroke="#666">
      <path d="M.5 17V.5h17V8M.5 17h8" />
      <path d="M1 3h16" strokeWidth="2" />
      <path d="M3 8h3M3 11h3M3 14h3" />
      <circle cx="13" cy="12.500" r="4.500" fill="#fff" />
      <circle cx="13" cy="12.500" r="2.400" fill="#555" stroke="none" />
    </svg>
    <div className="flex-1" />
    <div className="flex h-full w-[50px] items-center justify-center bg-[#c6c6c6]">
      <svg width="17" height="17" viewBox="0 0 17 17" fill="none" stroke="#555" strokeWidth="1.400">
        <path d="M.7.7h15.600v15.600H.7zM6 1v15M11 1v15M1 6h15M1 11h15" />
      </svg>
    </div>
    <div className="flex h-full w-[50px] items-center justify-center">
      <svg width="18" height="17" viewBox="0 0 18 17" fill="none" stroke="#666" strokeWidth="1.300">
        <path d="M1 1h16v15H1z" />
        <path d="M5 3h8v11H5zM7 6h4M7 8.500h4M7 11h4" strokeWidth="1" />
      </svg>
    </div>
    <div className="flex h-full w-[50px] items-center justify-center">
      <svg width="18" height="17" viewBox="0 0 18 17" fill="none" stroke="#666" strokeWidth="1.500">
        <path d="M1 1h16v15H1zM1 10h6V1M11 1v8" />
      </svg>
    </div>
    <div className="flex h-full w-[24px] items-center justify-center">
      <div className="h-px w-[10px] bg-[#555]" />
    </div>
    <div className="relative flex h-full w-[125px] items-center">
      <div className="h-px w-full bg-[#a6a6a6]" />
      <div className="absolute top-[7px] left-[60px] h-[14px] w-[6px] bg-[#7a7a7a]" />
    </div>
    <div className="flex h-full w-[20px] items-center justify-center">
      <svg width="11" height="11" viewBox="0 0 11 11" stroke="#555">
        <path d="M5.500 0v11M0 5.500h11" />
      </svg>
    </div>
    <span className="mr-[11px] ml-[13px] w-[30px] text-[13.500px] whitespace-nowrap text-[#777]">100%</span>
  </div>
);

const Taskbar = () => (
  <div className={clsx("flex h-[50px] shrink-0 items-center bg-[#0a0f15]", SEGOE)}>
    <div className="flex h-full w-[60px] items-center justify-center">
      <WindowsLogo />
    </div>
    <div className="flex h-full w-[430px] items-center bg-[#f2f2f2]">
      <div className="ml-[11px] h-[27px] w-[27px] rounded-full border-[3.500px] border-[#111]" />
      <span className="ml-[12px] text-[16.5px] text-[#444]">Type here to search</span>
      <svg className="ml-auto mr-[18px]" width="14" height="21" viewBox="0 0 14 21" fill="none" stroke="#444" strokeWidth="1.300">
        <rect x="4" y="1" width="6" height="13" rx="3" fill="#ddd" />
        <path d="M1 9c0 4 2 7 6 7s6-3 6-7M7 16v3M4 20h6" />
      </svg>
    </div>
    <TaskSlot>
      <svg width="20" height="22" viewBox="0 0 20 22" fill="none" stroke="#fff" strokeWidth="1.400">
        <path d="M0 3h3M5 3h10M0 19h3M5 19h10M4 7h10v8H4zM17 1v3M17 9v2M17 14v6" />
      </svg>
    </TaskSlot>
    <TaskSlot>
      <FaEdgeLegacy size={27} className="text-[#0f78d4]" />
    </TaskSlot>
    <TaskSlot active>
      <svg width="28" height="26" viewBox="0 0 28 26">
        <path d="M0 2h10l2 3h16v21H0z" fill="#f8d775" />
        <path d="M3 3h6v3H3z" fill="#fff" />
        <path d="M7 15h14v11h-4v-5h-6v5H7z" fill="#3a96dd" />
        <path d="M9 11h10v4H9z" fill="#5eb4ee" />
      </svg>
    </TaskSlot>
    <TaskSlot>
      <svg width="28" height="32" viewBox="0 0 28 32">
        <path d="M9 8c0-8 10-8 10 0" fill="none" stroke="#ddd" strokeWidth="1.500" />
        <path d="M1 8h26v24H1z" fill="#fff" />
        <path d="M6 14h7v6H6z" fill="#f25022" />
        <path d="M14.500 14h7v6h-7z" fill="#7fba00" />
        <path d="M6 21h7v6H6z" fill="#00a4ef" />
        <path d="M14.500 21h7v6h-7z" fill="#ffb900" />
      </svg>
    </TaskSlot>
    <TaskSlot>
      <svg width="30" height="24" viewBox="0 0 30 24">
        <path d="M0 8L15 0l15 8v16H0z" fill="#fff" />
        <path d="M3 9h24l-3 10-7-6z" fill="#0a0f15" />
      </svg>
    </TaskSlot>
    <TaskSlot>
      <div className="flex h-[28px] w-[28px] items-center justify-center rounded-full bg-gradient-to-b from-[#0d2243] to-[#1a6aa5]">
        <FaSteam size={28} className="text-[#e6edf3]" />
      </div>
    </TaskSlot>
    <TaskSlot>
      <div className="relative flex h-[26px] w-[24px] items-center justify-center rounded-[3px] bg-[#7289da]">
        <FaDiscord size={16} className="text-white" />
        <div className="absolute -right-[1px] -bottom-[4px] h-0 w-0 border-t-[7px] border-l-[7px] border-l-transparent border-t-[#7289da]" />
      </div>
    </TaskSlot>
    <TaskSlot>
      <svg width="28" height="24" viewBox="0 0 28 24">
        <rect width="28" height="24" fill="#2c8ed6" />
        <rect x="2" y="2" width="24" height="20" fill="#8fd0f5" />
        <circle cx="9" cy="9" r="5" fill="#fff" />
        <path d="M9 9V4a5 5 0 0 1 5 5z" fill="#f0a030" />
        <path d="M4 17h10" stroke="#e09020" strokeWidth="1.500" />
        <path d="M16 5h8M16 9h8M16 13h8M16 17h8" stroke="#1d6fb0" strokeWidth="1.500" />
      </svg>
    </TaskSlot>
    <TaskSlot active>
      <ChromeIcon />
    </TaskSlot>
    <TaskSlot>
      <VsCodeIcon />
    </TaskSlot>
    <TaskSlot active>
      <svg width="28" height="28" viewBox="0 0 28 28" fill="none">
        <path d="M14 2.500a11.500 11.500 0 1 1-11.500 11.500" stroke="#3aa82a" strokeWidth="4" />
        <path d="M3 11a11.500 11.500 0 0 1 9-8.500" stroke="#2b7f20" strokeWidth="4" strokeDasharray="2 2" />
      </svg>
    </TaskSlot>
    <TaskSlot active>
      <SlackIcon />
    </TaskSlot>
    <TaskSlot active on>
      <ExcelIcon />
    </TaskSlot>
    <div className="ml-[275px] flex h-full w-[40px] items-center justify-center">
      <svg width="20" height="22" viewBox="0 0 20 22" fill="none" stroke="#fff" strokeWidth="1.200">
        <circle cx="13" cy="5" r="3.500" />
        <path d="M8 15c0-4 2-6 5-6s5 2 6 6" />
        <circle cx="6.500" cy="12" r="3.500" fill="#0a0f15" />
        <path d="M1 21c0-3 2-5 5.500-5s5.500 2 5.500 5" />
      </svg>
    </div>
    <div className="ml-[9px] flex h-full w-[30px] items-center justify-center">
      <ChevronUp size={22} strokeWidth={1.200} className="text-white" />
    </div>
    <div className="flex h-full w-[30px] items-center justify-center">
      <svg width="22" height="14" viewBox="0 0 22 14" fill="#d9d9d9">
        <path d="M3 14a3 3 0 0 1-1-6c0-3 3-5 5-4 2-4 8-4 10 0 3 0 5 3 4 6 0 2-1 4-3 4z" />
      </svg>
    </div>
    <div className="flex h-full w-[30px] items-center justify-center">
      <svg width="22" height="14" viewBox="0 0 22 14" fill="none" stroke="#fff" strokeWidth="1.200">
        <rect x="4" y="3" width="16" height="10" />
        <rect x="6" y="5" width="12" height="6" fill="#fff" stroke="none" />
        <path d="M21 6v4" />
        <path d="M1 0v3M4 0v3M0 3h5v3H0zM2.500 6v3" />
      </svg>
    </div>
    <div className="ml-px flex h-full w-[30px] items-center justify-center">
      <svg width="16" height="16" viewBox="0 0 16 16" fill="none" stroke="#fff" strokeWidth="1.100">
        <path d="M1 15C1 7 7 1 15 1M4 15c0-6 5-11 11-11M7.500 15c0-4 3-7 7.500-7" />
        <circle cx="13" cy="13.500" r="1.800" fill="#fff" stroke="none" />
      </svg>
    </div>
    <div className="flex h-full w-[28px] items-center justify-center">
      <VolumeX size={20} strokeWidth={1.100} className="text-white" />
    </div>
    <div className="ml-[2px] flex w-[80px] flex-col items-center text-[14px] leading-[22px] whitespace-nowrap text-white">
      <span>2:30 PM</span>
      <span>11/23/2019</span>
    </div>
    <div className="relative ml-[4px] flex h-full w-[48px] items-center justify-center">
      <div className="flex h-[19px] w-[20px] flex-col gap-[2px] bg-white px-[2px] pt-[4px]">
        <div className="h-px bg-[#111]" />
        <div className="h-px bg-[#111]" />
        <div className="h-px bg-[#111]" />
      </div>
      <div className="absolute top-[24px] left-[24px] flex h-[20px] w-[20px] items-center justify-center rounded-full border border-[#777] bg-[#2a2f35] text-[12px] font-bold text-white">3</div>
    </div>
    <div className="ml-[11px] h-full w-px bg-[#555]" />
  </div>
);

export default function App() {
  return (
    <div className="flex h-[1080px] w-[1920px] flex-col overflow-hidden">
      <TitleBar />
      <TabRow />
      <Ribbon />
      <FormulaBar />
      <Sheet />
      <TabsBar />
      <StatusBar />
      <Taskbar />
    </div>
  );
}
